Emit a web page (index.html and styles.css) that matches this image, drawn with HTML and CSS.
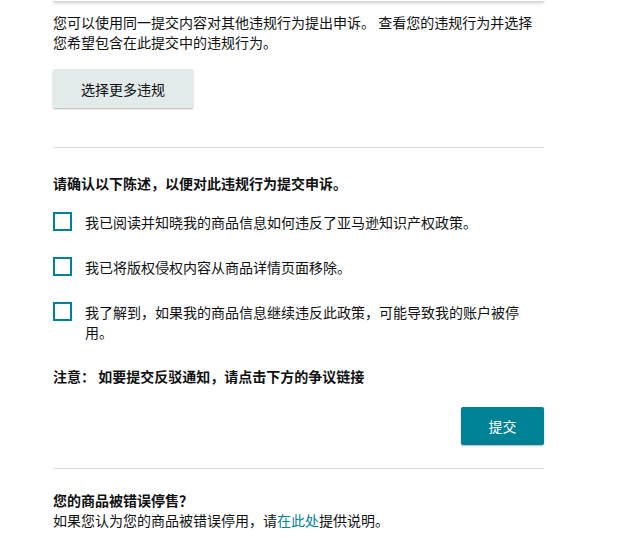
FILE: index.html
```html
<!DOCTYPE html>
<html lang="zh-CN">
<head>
<meta charset="utf-8">
<link rel="stylesheet" href="styles.css">
</head>
<body>
<div class="page">
  <div class="card-tail"></div>
  <p class="intro">您可以使用同一提交内容对其他违规行为提出申诉。 查看您的违规行为并选择您希望包含在此提交中的违规行为。</p>
  <button class="btn-secondary">选择更多违规</button>
  <hr class="divider first">
  <h3 class="confirm-title">请确认以下陈述，以便对此违规行为提交申诉。</h3>
  <div class="checks">
    <label class="check-row"><span class="box"></span><span class="check-text">我已阅读并知晓我的商品信息如何违反了亚马逊知识产权政策。</span></label>
    <label class="check-row"><span class="box"></span><span class="check-text">我已将版权侵权内容从商品详情页面移除。</span></label>
    <label class="check-row"><span class="box"></span><span class="check-text">我了解到，如果我的商品信息继续违反此政策，可能导致我的账户被停用。</span></label>
  </div>
  <p class="note">注意： 如要提交反驳通知，请点击下方的争议链接</p>
  <div class="actions"><button class="btn-primary">提交</button></div>
  <hr class="divider second">
  <h3 class="help-title">您的商品被错误停售？</h3>
  <p class="help-text">如果您认为您的商品被错误停用，请<a class="link" href="#">在此处</a>提供说明。</p>
</div>
</body>
</html>
```

FILE: styles.css
```css
* { box-sizing: border-box; }
html, body { margin: 0; padding: 0; background: #fff; }
body {
  font-family: "Noto Sans CJK SC", "Liberation Sans", sans-serif;
  font-size: 14px;
  line-height: 20px;
  color: #0f1111;
}
.page {
  width: 491px;
  margin-left: 53px;
}
.card-tail {
  height: 2px;
  background: #fff;
  border-bottom: 1px solid #d5d9d9;
  box-shadow: 0 1px 3px rgba(0, 0, 0, 0.25);
}
.intro {
  margin: 10px 0 0;
}
.btn-secondary {
  display: block;
  margin-top: 17px;
  width: 140px;
  height: 39px;
  border: 0;
  border-radius: 2px;
  background: #e3eaea;
  box-shadow: 0 1px 2px rgba(0, 0, 0, 0.3);
  font: inherit;
  color: #0f1111;
  padding: 0;
}
.divider {
  border: 0;
  height: 1px;
  background: #d5dbdb;
  margin: 0;
}
.divider.first { margin-top: 39px; }
.confirm-title {
  margin: 25px 0 0;
  font-size: 14px;
  font-weight: 700;
  line-height: 20px;
}
.checks {
  margin-top: 19px;
  display: flex;
  flex-direction: column;
  gap: 25px;
}
.check-row {
  display: flex;
  align-items: flex-start;
  gap: 13px;
}
.box {
  flex: none;
  width: 19px;
  height: 19px;
  border: 2px solid #008296;
  background: #fff;
}
.check-text {
  padding-right: 10px;
}
.note {
  margin: 24px 0 0;
  font-weight: 700;
}
.actions {
  display: flex;
  justify-content: flex-end;
  margin-top: 21px;
}
.btn-primary {
  width: 83px;
  height: 38px;
  border: 0;
  border-radius: 2px;
  background: #008296;
  color: #fff;
  font: inherit;
  box-shadow: 0 1px 2px rgba(0, 0, 0, 0.3);
  padding: 0;
}
.divider.second { margin-top: 23px; }
.help-title {
  margin: 21px 0 0;
  font-size: 14px;
  font-weight: 700;
  line-height: 20px;
}
.help-text { margin: 0; }
.link { color: #008296; text-decoration: none; }
```
